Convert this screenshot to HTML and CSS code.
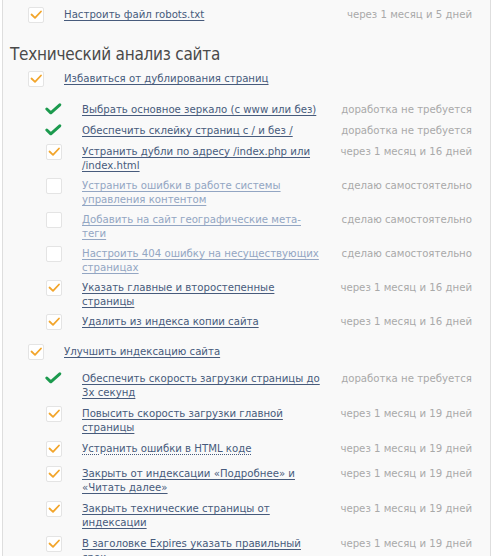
FILE: index.html
```html
<!DOCTYPE html>
<html lang="ru">
<head>
<meta charset="utf-8">
<title>Технический анализ сайта</title>
<link rel="stylesheet" href="styles.css">
</head>
<body>
<div class="panel">
  <ul class="tasks">
    <li class="row">
      <span class="cb"><svg viewBox="0 0 16 16"><polyline class="ck" points="3.5,7.5 7,10.8 13,4.5"/></svg></span>
      <span class="text"><a class="task" href="#">Настроить файл robots.txt</a></span>
      <span class="due">через 1 месяц и 5 дней</span>
    </li>
  </ul>

  <h2 class="section-title">Технический анализ сайта</h2>

  <ul class="tasks">
    <li class="group">
      <div class="row">
        <span class="cb"><svg viewBox="0 0 16 16"><polyline class="ck" points="3.5,7.5 7,10.8 13,4.5"/></svg></span>
        <span class="text"><a class="task" href="#">Избавиться от дублирования страниц</a></span>
      </div>
      <ul class="sub sub-first">
        <li class="row">
          <span class="done"><svg viewBox="0 0 16 16"><polyline class="ok" points="0.8,7 4.8,10.8 13.8,2.8"/></svg></span>
          <span class="text"><a class="task" href="#">Выбрать основное зеркало (с www или без)</a></span>
          <span class="due">доработка не требуется</span>
        </li>
        <li class="row">
          <span class="done"><svg viewBox="0 0 16 16"><polyline class="ok" points="0.8,7 4.8,10.8 13.8,2.8"/></svg></span>
          <span class="text"><a class="task" href="#">Обеспечить склейку страниц с / и без /</a></span>
          <span class="due">доработка не требуется</span>
        </li>
        <li class="row">
          <span class="cb"><svg viewBox="0 0 16 16"><polyline class="ck" points="3.5,7.5 7,10.8 13,4.5"/></svg></span>
          <span class="text"><a class="task" href="#">Устранить дубли по адресу /index.php или /index.html</a></span>
          <span class="due">через 1 месяц и 16 дней</span>
        </li>
        <li class="row">
          <span class="cb"></span>
          <span class="text"><a class="task muted" href="#">Устранить ошибки в работе системы управления контентом</a></span>
          <span class="due">сделаю самостоятельно</span>
        </li>
        <li class="row">
          <span class="cb"></span>
          <span class="text"><a class="task muted" href="#">Добавить на сайт географические мета-теги</a></span>
          <span class="due">сделаю самостоятельно</span>
        </li>
        <li class="row">
          <span class="cb"></span>
          <span class="text"><a class="task muted" href="#">Настроить 404 ошибку на несуществующих страницах</a></span>
          <span class="due">сделаю самостоятельно</span>
        </li>
        <li class="row">
          <span class="cb"><svg viewBox="0 0 16 16"><polyline class="ck" points="3.5,7.5 7,10.8 13,4.5"/></svg></span>
          <span class="text"><a class="task" href="#">Указать главные и второстепенные страницы</a></span>
          <span class="due">через 1 месяц и 16 дней</span>
        </li>
        <li class="row">
          <span class="cb"><svg viewBox="0 0 16 16"><polyline class="ck" points="3.5,7.5 7,10.8 13,4.5"/></svg></span>
          <span class="text"><a class="task" href="#">Удалить из индекса копии сайта</a></span>
          <span class="due">через 1 месяц и 16 дней</span>
        </li>
      </ul>
    </li>

    <li class="group">
      <div class="row">
        <span class="cb"><svg viewBox="0 0 16 16"><polyline class="ck" points="3.5,7.5 7,10.8 13,4.5"/></svg></span>
        <span class="text"><a class="task" href="#">Улучшить индексацию сайта</a></span>
      </div>
      <ul class="sub sub-loose">
        <li class="row">
          <span class="done"><svg viewBox="0 0 16 16"><polyline class="ok" points="0.8,7 4.8,10.8 13.8,2.8"/></svg></span>
          <span class="text"><a class="task" href="#">Обеспечить скорость загрузки страницы до 3х секунд</a></span>
          <span class="due">доработка не требуется</span>
        </li>
        <li class="row">
          <span class="cb"><svg viewBox="0 0 16 16"><polyline class="ck" points="3.5,7.5 7,10.8 13,4.5"/></svg></span>
          <span class="text"><a class="task" href="#">Повысить скорость загрузки главной страницы</a></span>
          <span class="due">через 1 месяц и 19 дней</span>
        </li>
        <li class="row row-spaced">
          <span class="cb"><svg viewBox="0 0 16 16"><polyline class="ck" points="3.5,7.5 7,10.8 13,4.5"/></svg></span>
          <span class="text"><a class="task dotted" href="#">Устранить ошибки в HTML коде</a></span>
          <span class="due">через 1 месяц и 19 дней</span>
        </li>
        <li class="row">
          <span class="cb"><svg viewBox="0 0 16 16"><polyline class="ck" points="3.5,7.5 7,10.8 13,4.5"/></svg></span>
          <span class="text"><a class="task" href="#">Закрыть от индексации «Подробнее» и «Читать далее»</a></span>
          <span class="due">через 1 месяц и 19 дней</span>
        </li>
        <li class="row">
          <span class="cb"><svg viewBox="0 0 16 16"><polyline class="ck" points="3.5,7.5 7,10.8 13,4.5"/></svg></span>
          <span class="text"><a class="task" href="#">Закрыть технические страницы от индексации</a></span>
          <span class="due">через 1 месяц и 19 дней</span>
        </li>
        <li class="row">
          <span class="cb"><svg viewBox="0 0 16 16"><polyline class="ck" points="3.5,7.5 7,10.8 13,4.5"/></svg></span>
          <span class="text"><a class="task" href="#">В заголовке Expires указать правильный срок</a></span>
          <span class="due">через 1 месяц и 19 дней</span>
        </li>
      </ul>
    </li>
  </ul>
</div>
</body>
</html>
```

FILE: styles.css
```css
html, body {
  margin: 0;
  background: #ffffff;
}

body {
  font-family: "DejaVu Sans Condensed", "DejaVu Sans", sans-serif;
  font-size: 11.3px;
  color: #444;
}

.panel {
  margin-left: 2px;
  width: 487px;
  min-height: 620px;
  padding-top: 4px;
  border-left: 1px solid #dedede;
  border-right: 1px solid #dedede;
  background: #f9f9f9;
}

ul {
  list-style: none;
  margin: 0;
  padding: 0;
}

.row {
  display: flex;
  align-items: flex-start;
  padding: 3px 18px 2px 25px;
}

.sub {
  margin: 8px 0 9px;
}

.sub-first {
  margin-top: 10px;
}

.sub-loose {
  margin-top: 6px;
}

.sub .row {
  padding-left: 43px;
}

.sub-loose .row {
  padding-bottom: 3px;
}

.sub-loose .row-spaced {
  padding-bottom: 6px;
}

.cb,
.done {
  flex: none;
  width: 16px;
  height: 16px;
  margin-right: 20px;
  box-sizing: border-box;
}

.cb {
  border: 1px solid #e4e4e4;
  border-radius: 2px;
  background: #ffffff;
}

.cb svg,
.done svg {
  display: block;
  width: 16px;
  height: 16px;
  overflow: visible;
}

.cb svg {
  margin: -1px;
}

.ck {
  fill: none;
  stroke: #f2a52b;
  stroke-width: 1.8;
  stroke-linecap: round;
  stroke-linejoin: round;
}

.ok {
  fill: none;
  stroke: #1c9a4e;
  stroke-width: 3;
  stroke-linecap: round;
  stroke-linejoin: round;
}

.text {
  flex: 1;
  min-width: 0;
  padding-top: 1px;
  line-height: 14px;
}

.task {
  color: #475b7c;
  text-decoration: underline;
  text-underline-offset: 2px;
}

.task.muted {
  color: #93a6c3;
}

.task.dotted {
  text-decoration-style: dotted;
}

.due {
  flex: none;
  width: 150px;
  padding-top: 1px;
  line-height: 14px;
  text-align: right;
  color: #a9a9a9;
}

.section-title {
  margin: 18px 0 3px 7px;
  font-size: 17px;
  letter-spacing: -0.25px;
  line-height: 22px;
  font-weight: normal;
  color: #4a4a4a;
}
```
